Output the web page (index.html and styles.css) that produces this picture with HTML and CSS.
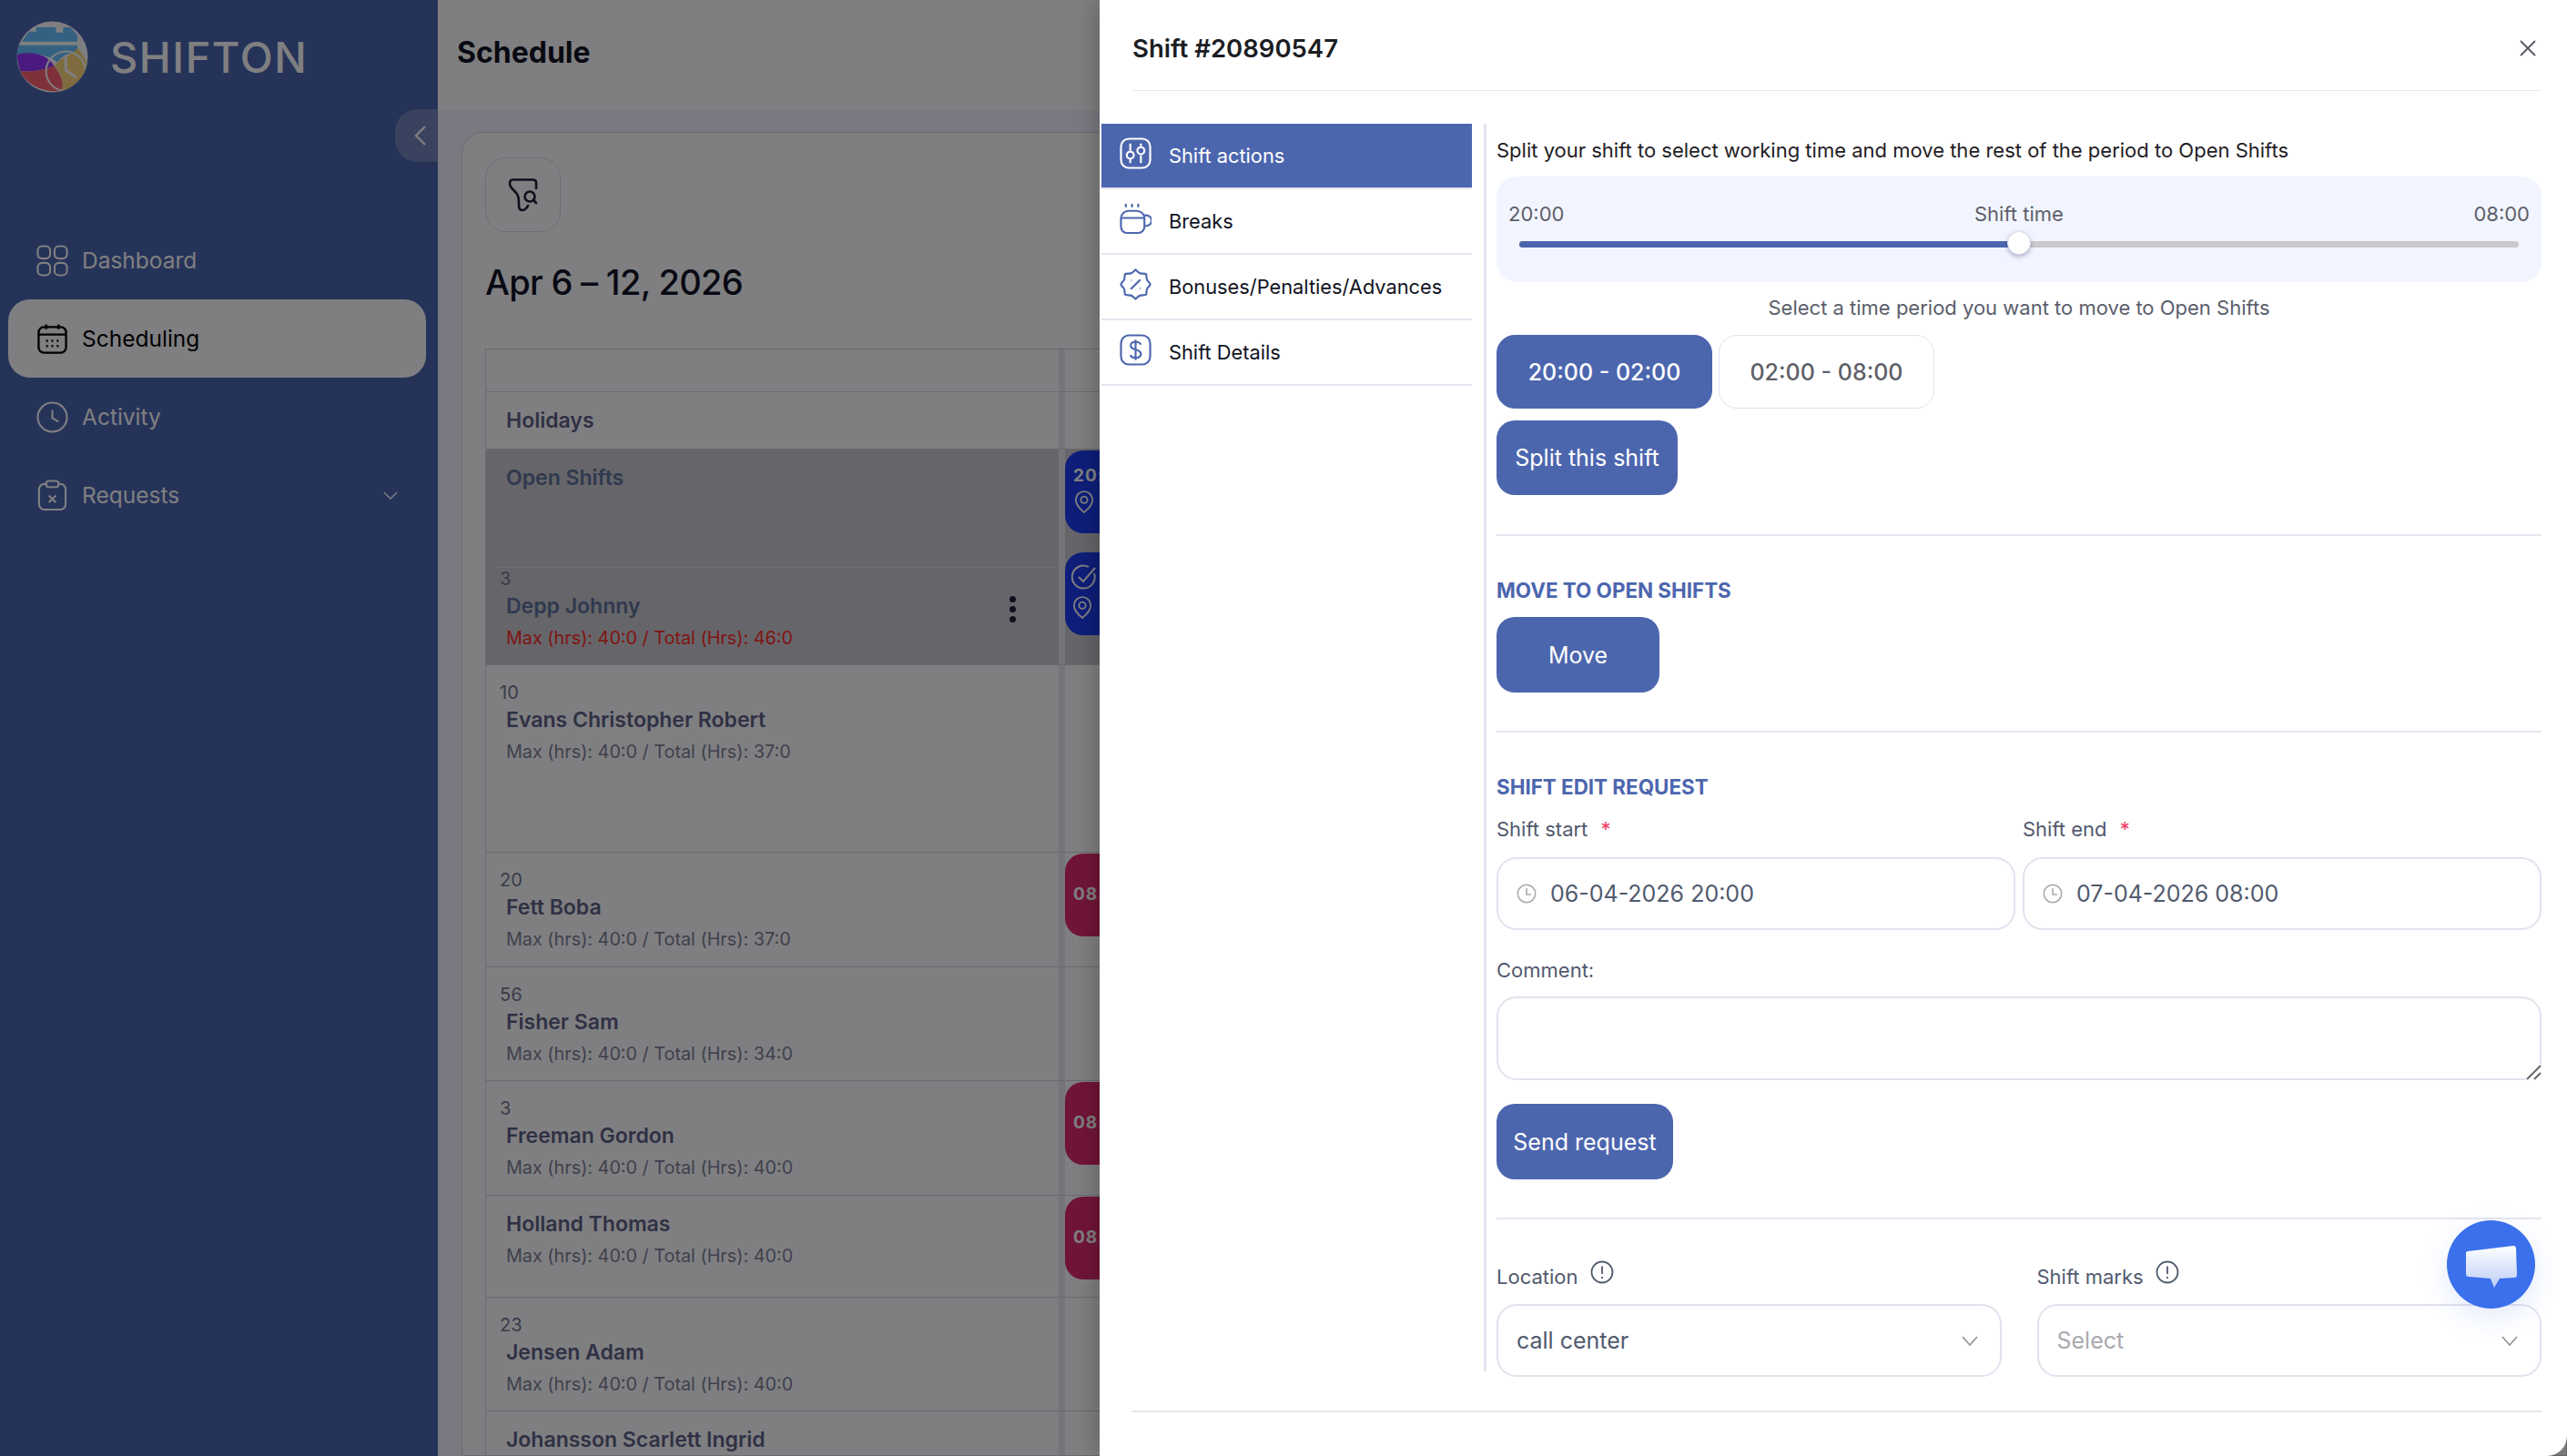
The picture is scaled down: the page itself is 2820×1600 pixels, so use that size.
FILE: index.html
```html
<!DOCTYPE html>
<html lang="en">
<head>
    <meta charset="UTF-8">
    <title>Schedule</title>
    <link rel="stylesheet" href="styles.css">
</head>
<body>

<div class="app">
    <!-- Sidebar -->
    <aside class="sidebar">
        <div class="brand">
            <svg class="brand-logo" viewBox="0 0 80 80">
                <defs><clipPath id="logoClip"><circle cx="40" cy="40" r="39.5"/></clipPath></defs>
                <g clip-path="url(#logoClip)">
                    <rect width="80" height="80" fill="#ffffff"/>
                    <path d="M6 23 L14 12 H22 V7 H44 V13 H52 V7 H60 L68 16 V23 Z" fill="#69c3ff"/>
                    <path d="M1 27 H68 V34 C60 36 50 38 46 46 C30 34 10 36 0 38 Z" fill="#69c3ff"/>
                    <path d="M0 38 C12 34 32 34 42 50 C30 55 14 57 4 56 Z" fill="#9535fc"/>
                    <path d="M4 56 C14 57 30 55 42 50 C50 60 54 70 50 78 C30 80 12 72 4 56 Z" fill="#ff6370"/>
                    <path d="M46 46 C50 40 62 38 68 30 C72 36 79 44 79 50 C76 62 62 76 50 78 C54 70 50 56 42 50 Z" fill="#fdd97a"/>
                    <circle cx="55" cy="56" r="22" fill="none" stroke="#ffffff" stroke-width="2"/>
                    <path d="M55 38 V55 L67 63" fill="none" stroke="#ffffff" stroke-width="3"/>
                </g>
            </svg>
            <span class="brand-name">SHIFTON</span>
        </div>

        <div class="collapse-tab">
            <svg width="14" height="24" viewBox="0 0 14 24"><path d="M12 2 L2 12 L12 22" fill="none" stroke="#ffffff" stroke-width="2.4"/></svg>
        </div>

        <nav class="nav">
            <a class="nav-item">
                <svg class="nav-icon" viewBox="0 0 36 36" fill="none" stroke="currentColor" stroke-width="2.2">
                    <rect x="1.5" y="1.5" width="14" height="14" rx="5"/><rect x="20.5" y="1.5" width="14" height="14" rx="5"/>
                    <rect x="1.5" y="20.5" width="14" height="14" rx="5"/><rect x="20.5" y="20.5" width="14" height="14" rx="5"/>
                </svg>
                Dashboard
            </a>
            <a class="nav-item nav-item-active">
                <svg class="nav-icon" viewBox="0 0 36 36" fill="none" stroke="currentColor" stroke-width="2.4">
                    <rect x="2.5" y="4.5" width="31" height="29" rx="6"/>
                    <path d="M2.5 13 H33.5 M11 1.5 V7 M25 1.5 V7"/>
                    <path d="M11 20 H13 M17 20 H19 M23 20 H25 M11 26 H13 M17 26 H19 M23 26 H25" stroke-width="2.6"/>
                </svg>
                Scheduling
            </a>
            <a class="nav-item">
                <svg class="nav-icon" viewBox="0 0 36 36" fill="none" stroke="currentColor" stroke-width="2.2">
                    <circle cx="18" cy="18" r="16.5"/><path d="M18 10 V19 L25 23"/>
                </svg>
                Activity
            </a>
            <a class="nav-item">
                <svg class="nav-icon" viewBox="0 0 36 36" fill="none" stroke="currentColor" stroke-width="2.2">
                    <rect x="3" y="5" width="30" height="29" rx="6"/>
                    <rect x="11" y="1.5" width="14" height="7" rx="3" fill="#4c66ae"/>
                    <path d="M14 18 L22 26 M22 18 L14 26"/>
                </svg>
                Requests
                <svg class="nav-caret" width="16" height="9" viewBox="0 0 18 10"><path d="M1 1 L9 9 L17 1" fill="none" stroke="currentColor" stroke-width="1.6"/></svg>
            </a>
        </nav>
    </aside>

    <!-- Schedule page behind the drawer -->
    <main class="main">
        <header class="main-header"><h1>Schedule</h1></header>
        <div class="main-body">
            <section class="card">
                <button class="filter-btn">
                    <svg width="34" height="38" viewBox="0 0 34 38" fill="none" stroke="#1c1f33" stroke-width="2.6" stroke-linecap="round">
                        <path d="M31 12 V6 C31 3.500 30 2.500 27 2.500 H5 C3 2.500 2 4 2 7 C2 11 6 13 9 17 C12 20 12 24 12 28 V31 C12 35 14 36 16 36 C19 36 21 33 22 31"/>
                        <circle cx="24" cy="21" r="5.500"/><path d="M28.500 25.500 L31 28"/>
                    </svg>
                </button>
                <h2 class="range-title">Apr 6 – 12, 2026</h2>

                <div class="table">
                    <div class="row row-head"><div class="person"></div><div class="day"></div></div>
                    <div class="row row-holidays">
                        <div class="person person-nonum"><span class="person-name">Holidays</span></div>
                        <div class="day"></div>
                    </div>
                    <div class="row row-dark row-open">
                        <div class="person person-nonum"><span class="person-name">Open Shifts</span></div>
                        <div class="day">
                            <div class="chip chip-blue">
                                <span class="chip-time">20:00</span>
                                <svg class="chip-icon" viewBox="0 0 24 28" fill="none" stroke="#ffffff" stroke-width="2"><path d="M12 26 C6 21 2 17 2 11 A10 10 0 0 1 22 11 C22 17 18 21 12 26 Z"/><circle cx="12" cy="11" r="4"/></svg>
                            </div>
                        </div>
                    </div>
                    <div class="row row-dark row-depp">
                        <div class="person">
                            <div class="person-rule"></div>
                            <span class="person-num">3</span>
                            <span class="person-name">Depp Johnny</span>
                            <span class="person-meta person-meta-over">Max (hrs): 40:0 / Total (Hrs): 46:0</span>
                            <span class="kebab"><i></i><i></i><i></i></span>
                        </div>
                        <div class="day">
                            <div class="chip chip-blue chip-icons">
                                <svg class="chip-icon chip-check" viewBox="0 0 28 28" fill="none" stroke="#ffffff" stroke-width="2"><path d="M25 10 A12.5 12.5 0 1 1 19 3"/><path d="M8 14 L13 19 L26 4"/></svg>
                                <svg class="chip-icon" viewBox="0 0 24 28" fill="none" stroke="#ffffff" stroke-width="2"><path d="M12 26 C6 21 2 17 2 11 A10 10 0 0 1 22 11 C22 17 18 21 12 26 Z"/><circle cx="12" cy="11" r="4"/></svg>
                            </div>
                        </div>
                    </div>
                    <div class="row row-evans">
                        <div class="person">
                            <span class="person-num">10</span>
                            <span class="person-name">Evans Christopher Robert</span>
                            <span class="person-meta">Max (hrs): 40:0 / Total (Hrs): 37:0</span>
                        </div>
                        <div class="day"></div>
                    </div>
                    <div class="row">
                        <div class="person">
                            <span class="person-num">20</span>
                            <span class="person-name">Fett Boba</span>
                            <span class="person-meta">Max (hrs): 40:0 / Total (Hrs): 37:0</span>
                        </div>
                        <div class="day"><div class="chip chip-red"><span class="chip-time">08:00</span></div></div>
                    </div>
                    <div class="row">
                        <div class="person">
                            <span class="person-num">56</span>
                            <span class="person-name">Fisher Sam</span>
                            <span class="person-meta">Max (hrs): 40:0 / Total (Hrs): 34:0</span>
                        </div>
                        <div class="day"></div>
                    </div>
                    <div class="row">
                        <div class="person">
                            <span class="person-num">3</span>
                            <span class="person-name">Freeman Gordon</span>
                            <span class="person-meta">Max (hrs): 40:0 / Total (Hrs): 40:0</span>
                        </div>
                        <div class="day"><div class="chip chip-red"><span class="chip-time">08:00</span></div></div>
                    </div>
                    <div class="row row-holland">
                        <div class="person person-nonum">
                            <span class="person-name">Holland Thomas</span>
                            <span class="person-meta">Max (hrs): 40:0 / Total (Hrs): 40:0</span>
                        </div>
                        <div class="day"><div class="chip chip-red"><span class="chip-time">08:00</span></div></div>
                    </div>
                    <div class="row">
                        <div class="person">
                            <span class="person-num">23</span>
                            <span class="person-name">Jensen Adam</span>
                            <span class="person-meta">Max (hrs): 40:0 / Total (Hrs): 40:0</span>
                        </div>
                        <div class="day"></div>
                    </div>
                    <div class="row row-last">
                        <div class="person person-nonum">
                            <span class="person-name">Johansson Scarlett Ingrid</span>
                        </div>
                        <div class="day"></div>
                    </div>
                </div>
            </section>
        </div>
    </main>
</div>

<div class="scrim"></div>

<!-- Shift drawer -->
<div class="drawer">
    <div class="drawer-header">
        <h2>Shift #20890547</h2>
        <svg class="drawer-close" width="18" height="18" viewBox="0 0 18 18"><path d="M1 1 L17 17 M17 1 L1 17" stroke="#55575f" stroke-width="1.8"/></svg>
    </div>

    <div class="drawer-body">
        <ul class="tabs">
            <li class="tab tab-active">
                <svg class="tab-icon" viewBox="0 0 36 36" fill="none" stroke="currentColor" stroke-width="2.2">
                    <rect x="1.5" y="1.5" width="33" height="33" rx="9"/>
                    <path d="M12 7 V15 M12 24 V29 M24 7 V10 M24 20 V29"/>
                    <circle cx="12" cy="20" r="4"/><circle cx="24" cy="15" r="4"/>
                </svg>
                Shift actions
            </li>
            <li class="tab">
                <svg class="tab-icon" viewBox="0 0 36 36" fill="none" stroke="currentColor" stroke-width="2.2">
                    <path d="M7 1 V5 M14 1 V5 M21 1 V5"/>
                    <path d="M1.5 17 A9 8 0 0 1 10 9 H19 A9 8 0 0 1 28 17 V27 A7 7 0 0 1 21 34 H8 A7 7 0 0 1 1.5 27 Z"/>
                    <path d="M1.5 17 H28 M28 14 H30 A5 5 0 0 1 30 26 H28"/>
                </svg>
                Breaks
            </li>
            <li class="tab">
                <svg class="tab-icon" viewBox="0 0 36 36" fill="none" stroke="currentColor" stroke-width="2.2">
                    <path d="M18 1.5 C20 3 21 5 23.5 5.500 C26 6 28.500 5.500 30 6.500 C30.500 9 30 11 31 13 C32 15 34.500 16 34.500 18 C34.500 20 32 21 31 23 C30 25 30.500 27 30 29.500 C28.500 30.500 26 30 23.5 30.500 C21 31 20 33 18 34.500 C16 33 15 31 12.500 30.500 C10 30 7.500 30.500 6 29.500 C5.500 27 6 25 5 23 C4 21 1.500 20 1.500 18 C1.500 16 4 15 5 13 C6 11 5.500 9 6 6.500 C7.500 5.500 10 6 12.500 5.500 C15 5 16 3 18 1.500 Z" stroke-linejoin="round"/>
                    <path d="M12.5 23.5 L23.5 12.5"/><path d="M13 13.5 H13.6 M22.6 22.5 H23.2" stroke-width="3"/>
                </svg>
                Bonuses/Penalties/Advances
            </li>
            <li class="tab">
                <svg class="tab-icon" viewBox="0 0 36 36" fill="none" stroke="currentColor" stroke-width="2.2">
                    <rect x="1.5" y="1.5" width="33" height="33" rx="9"/>
                    <path d="M24 12 C23 9.500 21 9 18 9 C14.500 9 12.500 10.500 12.500 13 C12.500 19 24 16 24 23 C24 25.500 22 27 18 27 C15 27 13 26 12 24 M18 6.500 V29.500"/>
                </svg>
                Shift Details
            </li>
        </ul>

        <div class="content-rule"></div>

        <div class="content">
            <p class="hint">Split your shift to select working time and move the rest of the period to Open Shifts</p>

            <div class="slider-box">
                <div class="slider-labels"><span>20:00</span><span>Shift time</span><span>08:00</span></div>
                <div class="slider-track">
                    <div class="slider-fill"></div>
                    <div class="slider-thumb"></div>
                </div>
            </div>

            <p class="hint-center">Select a time period you want to move to Open Shifts</p>

            <div class="periods">
                <button class="period period-active">20:00 - 02:00</button>
                <button class="period">02:00 - 08:00</button>
            </div>
            <button class="btn btn-split">Split this shift</button>

            <hr class="rule rule-split">

            <h3 class="section-title">MOVE TO OPEN SHIFTS</h3>
            <button class="btn btn-move">Move</button>

            <hr class="rule rule-move">

            <h3 class="section-title">SHIFT EDIT REQUEST</h3>
            <div class="field-grid field-grid-dates">
                <div class="field">
                    <label class="field-label">Shift start <em>*</em></label>
                    <div class="input">
                        <svg class="input-clock" viewBox="0 0 22 22" fill="none" stroke="#a8a8ad" stroke-width="1.5"><circle cx="11" cy="11" r="9.700"/><path d="M11 5 V12 H16"/></svg>
                        06-04-2026 20:00
                    </div>
                </div>
                <div class="field">
                    <label class="field-label">Shift end <em>*</em></label>
                    <div class="input">
                        <svg class="input-clock" viewBox="0 0 22 22" fill="none" stroke="#a8a8ad" stroke-width="1.5"><circle cx="11" cy="11" r="9.700"/><path d="M11 5 V12 H16"/></svg>
                        07-04-2026 08:00
                    </div>
                </div>
            </div>

            <label class="field-label comment-label">Comment:</label>
            <div class="comment-wrap">
                <textarea class="comment"></textarea>
                <svg class="comment-grip" width="17" height="17" viewBox="0 0 17 17"><path d="M1 16 L16 1 M9 16 L16 9" stroke="#66666c" stroke-width="2"/></svg>
            </div>

            <button class="btn btn-send">Send request</button>

            <hr class="rule rule-send">

            <div class="field-grid field-grid-selects">
                <div class="field">
                    <label class="field-label">Location
                        <svg class="info" viewBox="0 0 26 26" fill="none" stroke="#515a6e" stroke-width="1.800"><circle cx="13" cy="13" r="11.500"/><path d="M13 6.500 V15 M13 18 V20"/></svg>
                    </label>
                    <div class="input select">call center
                        <svg class="select-caret" width="18" height="11" viewBox="0 0 18 11"><path d="M1 1 L9 10 L17 1" fill="none" stroke="#8d8f96" stroke-width="1.500"/></svg>
                    </div>
                </div>
                <div class="field">
                    <label class="field-label">Shift marks
                        <svg class="info" viewBox="0 0 26 26" fill="none" stroke="#515a6e" stroke-width="1.800"><circle cx="13" cy="13" r="11.500"/><path d="M13 6.500 V15 M13 18 V20"/></svg>
                    </label>
                    <div class="input select select-empty">Select
                        <svg class="select-caret" width="18" height="11" viewBox="0 0 18 11"><path d="M1 1 L9 10 L17 1" fill="none" stroke="#8d8f96" stroke-width="1.500"/></svg>
                    </div>
                </div>
            </div>
        </div>
    </div>

    <div class="drawer-footer"></div>
</div>

<!-- Chat widget -->
<div class="chat-btn">
    <svg width="58" height="48" viewBox="0 0 58 48">
        <defs>
            <linearGradient id="bubble" x1="0" y1="0" x2="0" y2="1">
                <stop offset="0" stop-color="#ffffff"/><stop offset="1" stop-color="#bccdf5"/>
            </linearGradient>
        </defs>
        <path d="M3 7 L53 1 C55 1 56 2 56 4 L57 33 C57 35 56 36 54 36 L38 37 L32 47 L28 37 L4 35 C2 35 1 34 1 32 L1 9 C1 8 2 7 3 7 Z" fill="url(#bubble)"/>
    </svg>
</div>

</body>
</html>
```

FILE: styles.css
```css
/* General Styles */
* {
    box-sizing: border-box;
}

body {
    margin: 0;
    width: 2820px;
    height: 1600px;
    overflow: hidden;
    position: relative;
    font-family: Inter, "Liberation Sans", sans-serif;
    background-color: #ffffff;
    color: #111322;
}

h1, h2, h3, p, ul {
    margin: 0;
    padding: 0;
}

.app {
    display: flex;
    height: 1600px;
}

/* Sidebar */
.sidebar {
    width: 481px;
    flex-shrink: 0;
    background-color: #4c66ae;
    position: relative;
    color: #ffffff;
}

.brand {
    display: flex;
    align-items: center;
    height: 124px;
    padding-left: 18px;
    gap: 24px;
}

.brand-logo {
    width: 79px;
    height: 79px;
}

.brand-name {
    font-size: 47px;
    font-weight: 500;
    letter-spacing: 1.5px;
}

.collapse-tab {
    position: absolute;
    top: 120px;
    right: 0;
    width: 47px;
    height: 58px;
    background-color: #7385ba;
    border-radius: 25px 0 0 25px;
    display: flex;
    align-items: center;
    justify-content: center;
    padding-left: 8px;
}

.nav {
    padding: 119px 13px 0 9px;
}

.nav-item {
    display: flex;
    align-items: center;
    height: 86px;
    padding-left: 31px;
    gap: 15px;
    font-size: 24.5px;
    border-radius: 24px;
}

.nav-item-active {
    background-color: #ffffff;
    color: #000000;
}

.nav-icon {
    width: 35px;
    height: 35px;
}

.nav-caret {
    margin-left: auto;
    margin-right: 31px;
}

/* Schedule page */
.main {
    flex: 1;
    min-width: 0;
    background-color: #f3f2ff;
}

.main-header {
    height: 121px;
    background-color: #ffffff;
    padding: 38px 0 0 21px;
}

.main-header h1 {
    font-size: 32px;
    line-height: 40px;
    font-weight: 700;
}

.main-body {
    padding: 24px 0 0 26px;
}

.card {
    background-color: #ffffff;
    border: 1px solid #d8d7dd;
    border-radius: 24px 0 0 0;
    padding: 27px 0 0 25px;
    height: 1455px;
    overflow: hidden;
}

.filter-btn {
    display: flex;
    align-items: center;
    justify-content: center;
    width: 83px;
    height: 82px;
    padding: 0;
    background: #ffffff;
    border: 1px solid #dcdbe0;
    border-radius: 22px;
}

.range-title {
    font-size: 38px;
    line-height: 50px;
    font-weight: 500;
    letter-spacing: -0.7px;
    margin-top: 30px;
}

.table {
    margin-top: 48px;
    border-left: 1px solid #d6d5da;
    border-top: 1px solid #d6d5da;
}

.row {
    display: flex;
    height: 125.5px;
    border-bottom: 1px solid #d6d5da;
}

.row-head { height: 47px; }
.row-holidays { height: 63px; }
.row-open { height: 112px; border-bottom: 0; }
.row-depp { height: 125px; }
.row-evans { height: 206px; }
.row-holland { height: 112px; }
.row-last { height: 49px; border-bottom: 0; }

.row-dark {
    background-color: #cccad0;
}

.person {
    position: relative;
    width: 636px;
    flex-shrink: 0;
    padding: 18px 0 0 15px;
    border-right: 7px solid #ebe9ef;
}

.person-nonum {
    padding-top: 13px;
}

.person-rule {
    height: 1px;
    margin: -1px 0 0 -4px;
    background-color: #dedce2;
}

.person-num {
    display: block;
    font-size: 20px;
    line-height: 24px;
    color: #74788f;
}

.person-name {
    display: block;
    margin-left: 7px;
    font-size: 23px;
    line-height: 36px;
    font-weight: 600;
    color: #5f6385;
}

.row-dark .person-name {
    color: #5f7399;
}

.person-meta {
    display: block;
    margin-left: 7px;
    font-size: 19.8px;
    line-height: 34px;
    color: #7e8196;
}

.person-meta-over {
    color: #ff2a20;
}

.kebab {
    position: absolute;
    top: 49px;
    left: 575px;
    display: flex;
    flex-direction: column;
    gap: 4px;
}

.kebab i {
    width: 7px;
    height: 7px;
    border-radius: 50%;
    background-color: #1c1f33;
}

.day {
    flex: 1;
    min-width: 0;
}

.chip {
    width: 160px;
    height: 91px;
    margin-top: 1px;
    padding: 15px 0 0 9px;
    border-radius: 20px 0 0 20px;
    color: #ffffff;
    font-size: 19px;
    font-weight: 700;
    letter-spacing: 1px;
}

.chip-blue {
    background-color: #1c3cf0;
}

.chip-red {
    background-color: #e32a6c;
    padding-top: 32px;
}

.chip-time {
    display: block;
    line-height: 26px;
}

.chip-icon {
    display: block;
    width: 22px;
    height: 26px;
    margin-top: 3px;
    margin-left: 1px;
}

.chip-icons {
    padding-top: 13px;
    padding-left: 7px;
}

.chip-check {
    width: 28px;
    height: 28px;
    margin: 0 0 7px 0;
}

.scrim {
    position: absolute;
    inset: 0;
    background-color: rgba(0, 0, 4, 0.5);
}

/* Shift drawer */
.drawer {
    position: absolute;
    top: 0;
    right: 0;
    bottom: 0;
    width: 1612px;
    display: flex;
    flex-direction: column;
    background-color: #ffffff;
    border-bottom-right-radius: 22px;
    box-shadow: -6px 0 24px rgba(0, 0, 0, 0.2);
}

.drawer-header {
    display: flex;
    align-items: center;
    justify-content: space-between;
    height: 100px;
    margin: 0 28px 0 36px;
    padding: 6px 6px 0 0;
    border-bottom: 1.5px solid #e8e8ee;
}

.drawer-header h2 {
    font-size: 27.5px;
    font-weight: 600;
    color: #1c1e24;
}

.drawer-body {
    display: flex;
    height: 1450px;
    padding: 36px 28px 0 2px;
}

.tabs {
    list-style: none;
    width: 407px;
    flex-shrink: 0;
    margin-right: 13px;
}

.tab {
    display: flex;
    align-items: center;
    height: 72px;
    padding-left: 20px;
    gap: 19px;
    font-size: 21.8px;
    color: #111322;
    border-bottom: 2px solid #e6e6f0;
}

.tab-icon {
    width: 35px;
    height: 35px;
    color: #4c66ae;
    margin-top: -6px;
}

.tab-active {
    background-color: #4c66ae;
    color: #ffffff;
}

.tab-active .tab-icon {
    color: #ffffff;
}

.content-rule {
    width: 3px;
    height: 1371px;
    flex-shrink: 0;
    background-color: #e4e5f3;
    margin-right: 11px;
}

.content {
    flex: 1;
    min-width: 0;
    padding-top: 14px;
    font-size: 22px;
}

.hint {
    font-size: 22px;
    line-height: 30px;
    color: #1f2024;
}

.slider-box {
    margin-top: 14px;
    height: 116px;
    padding: 27px 13px 0;
    background-color: #f2f5ff;
    border-radius: 22px;
}

.slider-labels {
    display: flex;
    justify-content: space-between;
    line-height: 28px;
    color: #5e606a;
}

.slider-track {
    position: relative;
    height: 7px;
    margin: 16px 12px 0 12px;
    background-color: #cbc9cc;
    border-radius: 4px;
}

.slider-fill {
    width: 50%;
    height: 7px;
    background-color: #4c66ae;
    border-radius: 4px 0 0 4px;
}

.slider-thumb {
    position: absolute;
    top: -11px;
    left: calc(50% - 13px);
    width: 26px;
    height: 26px;
    background-color: #ffffff;
    border: 1px solid #dcdcea;
    border-radius: 50%;
    box-shadow: 0 2px 5px rgba(40, 50, 100, 0.35);
}

.hint-center {
    margin-top: 14px;
    line-height: 28px;
    text-align: center;
    color: #5b5e6b;
}

.periods {
    display: flex;
    gap: 7px;
    margin-top: 16px;
}

button {
    font-family: inherit;
}

.period {
    width: 237px;
    height: 81px;
    background-color: #ffffff;
    border: 1.5px solid #e2e2ec;
    border-radius: 20px;
    font-size: 25px;
    font-weight: 500;
    color: #5f6068;
}

.period-active {
    background-color: #4c66ae;
    border-color: #4c66ae;
    color: #ffffff;
}

.btn {
    display: block;
    height: 82px;
    padding: 0;
    border: none;
    border-radius: 20px;
    background-color: #4c66ae;
    color: #ffffff;
    font-size: 25px;
}

.btn-split {
    width: 199px;
    margin-top: 13px;
}

.btn-move {
    width: 179px;
    height: 83px;
    margin-top: 15px;
}

.btn-send {
    width: 194px;
    height: 83px;
    margin-top: 26px;
}

.rule {
    height: 2px;
    margin: 0;
    border: none;
    background-color: #e6e6f0;
}

.rule-split { margin-top: 43px; }
.rule-move { margin-top: 42px; }
.rule-send { margin-top: 42px; }

.section-title {
    margin-top: 46px;
    font-size: 22.4px;
    line-height: 28px;
    font-weight: 700;
    color: #4c66ae;
}

.field-grid {
    display: grid;
    grid-template-columns: 1fr 1fr;
}

.field-grid-dates {
    gap: 8px;
    margin-top: 18px;
}

.field-grid-selects {
    gap: 39px;
    margin-top: 45px;
}

.field-label {
    display: block;
    line-height: 28px;
    color: #515a6e;
}

.field-label em {
    font-style: normal;
    color: #ee3a62;
    margin-left: 8px;
}

.input {
    display: flex;
    align-items: center;
    height: 80px;
    margin-top: 17px;
    padding-left: 20px;
    gap: 15px;
    background-color: #ffffff;
    border: 2px solid #e2e2ee;
    border-radius: 22px;
    font-size: 25px;
    color: #515a6e;
}

.input-clock {
    width: 22px;
    height: 22px;
}

.comment-label {
    margin-top: 30px;
}

.comment-wrap {
    position: relative;
    margin-top: 15px;
}

.comment {
    display: block;
    width: 100%;
    height: 92px;
    background-color: #ffffff;
    border: 2px solid #e2e2ee;
    border-radius: 22px;
    outline: none;
    resize: none;
}

.comment-grip {
    position: absolute;
    right: 0;
    bottom: 0;
    background-color: #ffffff;
}

.info {
    width: 26px;
    height: 26px;
    margin-left: 7px;
    vertical-align: 0;
}

.select {
    justify-content: space-between;
    padding-right: 24px;
    margin-top: 16px;
}

.select-empty {
    color: #a9a9ae;
}

.drawer-footer {
    height: 2px;
    margin: 0 28px 0 36px;
    background-color: #e6e6f0;
}

/* Chat widget */
.chat-btn {
    position: absolute;
    left: 2688px;
    top: 1341px;
    width: 97px;
    height: 97px;
    display: flex;
    align-items: center;
    justify-content: center;
    padding-top: 5px;
    background-color: #3b70ec;
    border-radius: 50%;
    box-shadow: 0 10px 30px rgba(59, 112, 236, 0.15);
}
```
